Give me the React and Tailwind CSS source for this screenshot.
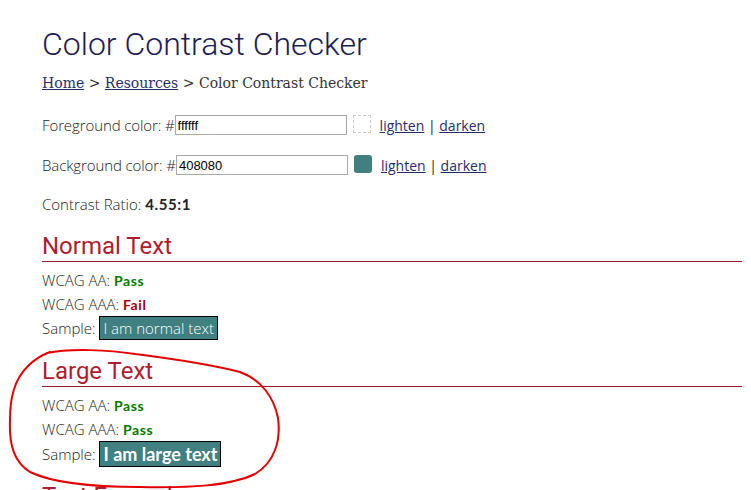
import React from 'react';

const body = { fontFamily: '"Open Sans", "Noto Sans", sans-serif' };

const Result = ({ label, ok }) => (
  <div className="h-[24px] flex items-center text-[15px] font-light text-[#222]">
    {label}:&nbsp;
    <span className={`text-[14px] font-bold tracking-[0.6px] ${ok ? 'text-[#007a00]' : 'text-[#a80000]'}`} style={{ fontFamily: 'Lato, sans-serif' }}>
      {ok ? 'Pass' : 'Fail'}
    </span>
  </div>
);

const Heading = ({ children }) => (
  <h2 className="h-[30px] text-[24px] leading-[28px] text-[#b01c2e] border-b border-[#a11a2a]" style={{ fontFamily: 'Roboto, sans-serif' }}>
    {children}
  </h2>
);

const ColorRow = ({ label, value, swatch }) => (
  <div className="h-[22px] flex items-center text-[15px] font-light text-[#222] tracking-[-0.1px]">
    <span>{label}: #</span>
    <input
      readOnly
      value={value}
      className="w-[172px] h-[20px] border border-[#a9a9a9] px-[2px] text-[13px] text-black font-normal tracking-normal"
      style={{ fontFamily: '"Liberation Sans", sans-serif' }}
    />
    <span className={`ml-[6px] w-[18px] h-[18px] -mt-[3px] border border-dashed ${swatch ? 'bg-[#408080] border-[#408080] rounded-[3px]' : 'border-[#ccc]'}`} />
    <span className="ml-[9px] text-[14px] font-normal tracking-normal">
      <a href="#" className="text-[#1f2e6b] underline">lighten</a> | <a href="#" className="text-[#1f2e6b] underline">darken</a>
    </span>
  </div>
);

export default function App() {
  return (
    <div className="relative h-[490px] bg-white overflow-hidden" style={body}>
      <div className="pl-[42px] w-[742px]">
        <h1 className="mt-[26px] h-[36px] text-[32px] leading-[36px] font-light text-[#1c1c52]" style={{ fontFamily: 'Roboto, sans-serif' }}>
          Color Contrast Checker
        </h1>
        <div className="mt-[12px] h-[18px] leading-[18px] text-[14px] text-[#333]" style={{ fontFamily: '"DejaVu Serif", serif' }}>
          <a href="#" className="text-[#1f2e6b] underline">Home</a> &gt; <a href="#" className="text-[#1f2e6b] underline">Resources</a> &gt; Color Contrast Checker
        </div>

        <div className="mt-[22px]">
          <ColorRow label="Foreground color" value="ffffff" />
        </div>
        <div className="mt-[18px]">
          <ColorRow label="Background color" value="408080" swatch />
        </div>

        <div className="mt-[16px] h-[24px] flex items-center text-[15px] font-light text-[#222]">
          Contrast Ratio:&nbsp;<span className="text-[15px] font-bold text-[#222] tracking-[0.6px]" style={{ fontFamily: 'Lato, sans-serif' }}>4.55:1</span>
        </div>

        <div className="mt-[16px]">
          <Heading>Normal Text</Heading>
          <div className="mt-[6px]">
            <Result label="WCAG AA" ok />
            <Result label="WCAG AAA" ok={false} />
            <div className="h-[24px] flex items-center text-[15px] font-light text-[#222]">
              Sample:&nbsp;
              <span className="h-[24px] px-[3px] flex items-center bg-[#408080] border border-black text-white text-[15px] font-light">
                I am normal text
              </span>
            </div>
          </div>
        </div>

        <div className="mt-[17px]">
          <Heading>Large Text</Heading>
          <div className="mt-[6px]">
            <Result label="WCAG AA" ok />
            <Result label="WCAG AAA" ok />
            <div className="h-[26px] flex items-center text-[15px] font-light text-[#222]">
              Sample:&nbsp;
              <span className="h-[26px] px-[3px] flex items-center bg-[#408080] border border-black text-white text-[18px] font-bold" style={{ fontFamily: 'Lato, sans-serif' }}>
                I am large text
              </span>
            </div>
          </div>
        </div>

        <div className="mt-[15px]">
          <Heading>Text Examples</Heading>
        </div>
      </div>

      {/* hand-drawn annotation */}
      <svg className="absolute left-0 top-0 pointer-events-none" width="751" height="490" viewBox="0 0 751 490">
        <path
          d="M47 353 C 70 348, 110 350, 135 354 C 165 358, 200 362, 240 372 C 262 380, 274 398, 278 418 C 281 440, 275 462, 255 474 C 230 486, 190 488, 140 487 C 95 487, 55 484, 30 472 C 14 462, 9 445, 10 420 C 10 398, 14 380, 28 366 C 35 359, 42 355, 50 352"
          fill="none"
          stroke="#e50000"
          strokeWidth="2"
          strokeLinecap="round"
        />
      </svg>
    </div>
  );
}
